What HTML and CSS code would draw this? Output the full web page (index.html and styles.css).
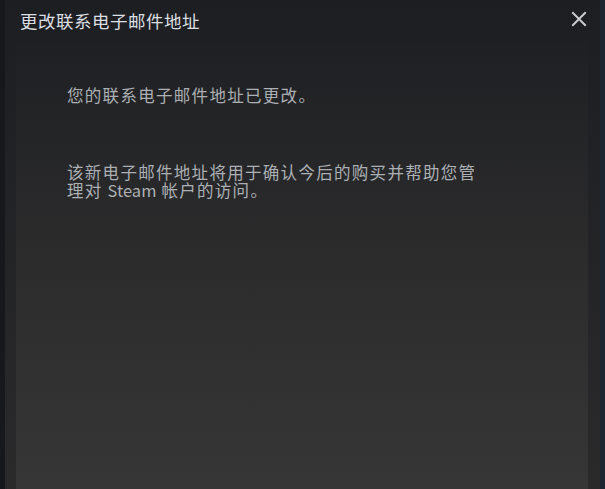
FILE: index.html
```html
<!DOCTYPE html>
<html lang="zh-CN">
<head>
<meta charset="utf-8">
<title>更改联系电子邮件地址</title>
<link rel="stylesheet" href="styles.css">
</head>
<body>
<div class="dialog">
  <div class="titlebar">
    <div class="title">更改联系电子邮件地址</div>
    <div class="close" aria-label="关闭">
      <svg width="16" height="16" viewBox="0 0 16 16"><path d="M2 2 L14 14 M14 2 L2 14" stroke="#c9cbcd" stroke-width="2" stroke-linecap="square" fill="none"/></svg>
    </div>
  </div>
  <div class="panel">
    <p class="msg">您的联系电子邮件地址已更改。</p>
    <p class="msg second">该新电子邮件地址将用于确认今后的购买并帮助您管<br>理对 <span class="latin">Steam</span> 帐户的访问。</p>
  </div>
</div>
</body>
</html>
```

FILE: styles.css
```css
html, body {
  margin: 0;
  padding: 0;
  height: 100%;
}
body {
  background: linear-gradient(to right, #16181c 0, #16181c 5px, #1c2531 5px);
  font-family: "Noto Sans CJK SC", "Noto Sans", sans-serif;
  overflow: hidden;
}
.dialog {
  margin-left: 5px;
  width: 595px;
  height: 489px;
  background: linear-gradient(to bottom, #1d1e22, #2a2a2b);
  display: flex;
  flex-direction: column;
}
.titlebar {
  height: 42px;
  display: flex;
  align-items: flex-start;
  justify-content: space-between;
  padding-left: 15px;
  padding-right: 13px;
  box-sizing: border-box;
}
.title {
  color: #dcdfe2;
  font-size: 17.5px;
  letter-spacing: 0.5px;
  line-height: 20px;
  margin-top: 11px;
}
.close {
  margin-top: 11px;
  width: 16px;
  height: 16px;
}
.close svg {
  display: block;
}
.panel {
  flex: 1;
  margin: 0 12px 0 11px;
  background: linear-gradient(to bottom, #1f2023 0%, #2b2b2c 45%, #363636 100%);
  padding: 44px 0 0 51px;
}
.msg {
  margin: 0;
  color: #acb0b4;
  font-size: 16.5px;
  letter-spacing: 1.3px;
  line-height: 18px;
}
.latin {
  letter-spacing: 0;
}
.second {
  margin-top: 59px;
}
```
